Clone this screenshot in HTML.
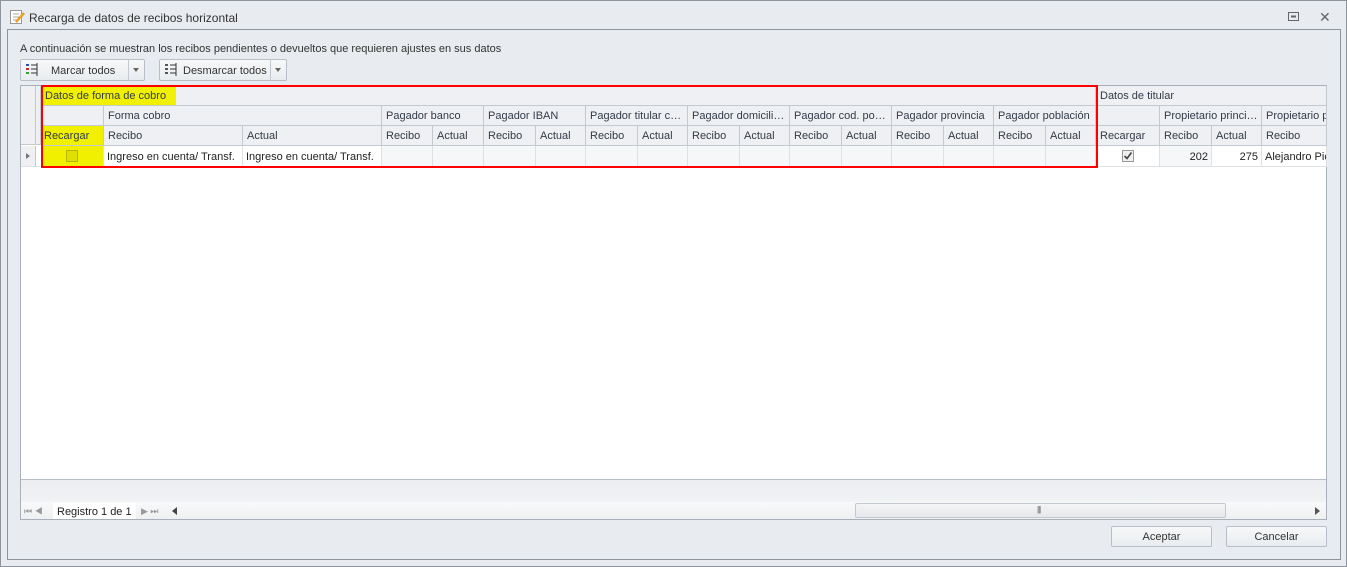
<!DOCTYPE html>
<html><head><meta charset="utf-8"><style>
*{box-sizing:border-box;margin:0;padding:0}
body{width:1347px;height:567px;background:#e8ebef;font-family:"Liberation Sans",sans-serif;font-size:11px;color:#222;position:relative;overflow:hidden}
.a{position:absolute}
.h{position:absolute;background:#eef0f3;border-right:1px solid #c3c9d1;border-bottom:1px solid #c3c9d1;color:#333b47;padding:4px 0 0 4px;white-space:nowrap;overflow:hidden;text-overflow:ellipsis;height:20px}
.d{position:absolute;border-right:1px solid #dde0e4;border-bottom:1px solid #dde0e4;height:21px;padding:5px 3px 0 3px;white-space:nowrap;overflow:hidden;background:#fff}
.btn{position:absolute;border:1px solid #b9bfc8;border-radius:2px;background:linear-gradient(#f7f8f9,#e9ecef);color:#333;text-align:center}
</style></head><body>
<div class="a" style="left:0;top:0;width:1347px;height:567px;border:1px solid #8d949c"></div>
<svg class="a" style="left:9px;top:9px" width="16" height="16"><rect x="1.5" y="1.5" width="11" height="13" fill="#fff" stroke="#999"/><line x1="4" y1="5" x2="10" y2="5" stroke="#aaa"/><line x1="4" y1="8" x2="10" y2="8" stroke="#aaa"/><line x1="4" y1="11" x2="8" y2="11" stroke="#aaa"/><path d="M7 13 L15 4" stroke="#e8a020" stroke-width="2.5"/></svg>
<div class="a" style="left:29px;top:11px;font-size:12px;color:#333">Recarga de datos de recibos horizontal</div>
<svg class="a" style="left:1288px;top:12px" width="12" height="10"><rect x="0.5" y="0.5" width="10" height="8" fill="none" stroke="#666"/><rect x="3" y="3.5" width="5" height="2" fill="#666"/></svg>
<div class="a" style="left:1319px;top:9px;font-size:14px;color:#666">✕</div>
<div class="a" style="left:7px;top:29px;width:1334px;height:531px;border:1px solid #8d949c"></div>
<div class="a" style="left:20px;top:43px;color:#333">A continuación se muestran los recibos pendientes o devueltos que requieren ajustes en sus datos</div>
<div class="btn" style="left:20px;top:59px;width:125px;height:22px"></div>
<div class="a" style="left:128px;top:59px;width:1px;height:22px;background:#c3c9d1"></div>
<svg class="a" style="left:26px;top:63px" width="12" height="13"><rect x="0" y="1" width="3" height="2" fill="#2a4fb0"/><rect x="0" y="5" width="3" height="2" fill="#c03030"/><rect x="0" y="9" width="3" height="2" fill="#30a030"/><path d="M5 2h6M5 6h6M5 10h6" stroke="#333"/><path d="M11 0v13" stroke="#333"/></svg>
<div class="a" style="left:51px;top:65px;color:#333">Marcar todos</div>
<div class="a" style="left:133px;top:68px;border:3px solid transparent;border-top:4px solid #666"></div>
<div class="btn" style="left:159px;top:59px;width:128px;height:22px"></div>
<div class="a" style="left:270px;top:59px;width:1px;height:22px;background:#c3c9d1"></div>
<svg class="a" style="left:165px;top:63px" width="12" height="13"><path d="M0 2h3M0 6h3M0 10h3" stroke="#555" stroke-width="2"/><path d="M5 2h6M5 6h6M5 10h6M11 0v13" stroke="#333"/></svg>
<div class="a" style="left:183px;top:65px;color:#333">Desmarcar todos</div>
<div class="a" style="left:275px;top:68px;border:3px solid transparent;border-top:4px solid #666"></div>
<div class="a" style="left:20px;top:85px;width:1307px;height:435px;background:#fff;border:1px solid #a9b0ba"></div>
<div class="a" style="left:21px;top:479px;width:1305px;height:40px;background:linear-gradient(#eceef1,#f4f5f7);border-top:1px solid #b8bfc9"></div>
<div class="h" style="left:21px;top:86px;width:15px;height:59px"></div>
<div class="h" style="left:36px;top:86px;width:5px;height:59px"></div>
<div class="h" style="left:41px;top:86px;width:1055px;padding-left:2px"><span style="background:#f0f000;padding:3px 10px 4px 2px">Datos de forma de cobro</span></div>
<div class="h" style="left:1096px;top:86px;width:231px">Datos de titular</div>
<div class="h" style="left:41px;top:106px;width:63px"></div>
<div class="h" style="left:104px;top:106px;width:278px">Forma cobro</div>
<div class="h" style="left:382px;top:106px;width:102px">Pagador banco</div>
<div class="h" style="left:484px;top:106px;width:102px">Pagador IBAN</div>
<div class="h" style="left:586px;top:106px;width:102px">Pagador titular cuenta</div>
<div class="h" style="left:688px;top:106px;width:102px">Pagador domicilio completo</div>
<div class="h" style="left:790px;top:106px;width:102px">Pagador cod. postal</div>
<div class="h" style="left:892px;top:106px;width:102px">Pagador provincia</div>
<div class="h" style="left:994px;top:106px;width:102px">Pagador población</div>
<div class="h" style="left:1096px;top:106px;width:64px"></div>
<div class="h" style="left:1160px;top:106px;width:102px">Propietario principal</div>
<div class="h" style="left:1262px;top:106px;width:65px;text-overflow:clip">Propietario p</div>
<div class="h" style="left:41px;top:126px;width:63px;background:#f0f000;padding-left:3px">Recargar</div>
<div class="h" style="left:104px;top:126px;width:139px">Recibo</div>
<div class="h" style="left:243px;top:126px;width:139px">Actual</div>
<div class="h" style="left:382px;top:126px;width:51px">Recibo</div><div class="h" style="left:433px;top:126px;width:51px">Actual</div>
<div class="h" style="left:484px;top:126px;width:52px">Recibo</div><div class="h" style="left:536px;top:126px;width:50px">Actual</div>
<div class="h" style="left:586px;top:126px;width:52px">Recibo</div><div class="h" style="left:638px;top:126px;width:50px">Actual</div>
<div class="h" style="left:688px;top:126px;width:52px">Recibo</div><div class="h" style="left:740px;top:126px;width:50px">Actual</div>
<div class="h" style="left:790px;top:126px;width:52px">Recibo</div><div class="h" style="left:842px;top:126px;width:50px">Actual</div>
<div class="h" style="left:892px;top:126px;width:52px">Recibo</div><div class="h" style="left:944px;top:126px;width:50px">Actual</div>
<div class="h" style="left:994px;top:126px;width:52px">Recibo</div><div class="h" style="left:1046px;top:126px;width:50px">Actual</div>
<div class="h" style="left:1096px;top:126px;width:64px">Recargar</div>
<div class="h" style="left:1160px;top:126px;width:52px">Recibo</div><div class="h" style="left:1212px;top:126px;width:50px">Actual</div>
<div class="h" style="left:1262px;top:126px;width:65px">Recibo</div>
<div class="d" style="left:21px;top:146px;width:15px;background:#eef0f3;border-right-color:#c3c9d1"><div class="a" style="left:5px;top:7px;border:3px solid transparent;border-left:4px solid #777"></div></div>
<div class="d" style="left:36px;top:146px;width:5px"></div>
<div class="d" style="left:41px;top:146px;width:63px;background:#f0f000"><div class="a" style="left:25px;top:4px;width:12px;height:12px;border:1px solid #b5b500;background:#e0e000"></div></div>
<div class="d" style="left:104px;top:146px;width:139px">Ingreso en cuenta/ Transf.</div>
<div class="d" style="left:243px;top:146px;width:139px">Ingreso en cuenta/ Transf.</div>
<div class="d" style="left:382px;top:146px;width:51px;background:#f6f7f8"></div><div class="d" style="left:433px;top:146px;width:51px;background:#f6f7f8"></div>
<div class="d" style="left:484px;top:146px;width:52px;background:#f6f7f8"></div><div class="d" style="left:536px;top:146px;width:50px;background:#f6f7f8"></div>
<div class="d" style="left:586px;top:146px;width:52px;background:#f6f7f8"></div><div class="d" style="left:638px;top:146px;width:50px;background:#f6f7f8"></div>
<div class="d" style="left:688px;top:146px;width:52px;background:#f6f7f8"></div><div class="d" style="left:740px;top:146px;width:50px;background:#f6f7f8"></div>
<div class="d" style="left:790px;top:146px;width:52px;background:#f6f7f8"></div><div class="d" style="left:842px;top:146px;width:50px;background:#f6f7f8"></div>
<div class="d" style="left:892px;top:146px;width:52px;background:#f6f7f8"></div><div class="d" style="left:944px;top:146px;width:50px;background:#f6f7f8"></div>
<div class="d" style="left:994px;top:146px;width:52px;background:#f6f7f8"></div><div class="d" style="left:1046px;top:146px;width:50px;background:#f6f7f8"></div>
<div class="d" style="left:1096px;top:146px;width:64px"><svg class="a" style="left:26px;top:4px" width="12" height="12"><rect x="0.5" y="0.5" width="11" height="11" fill="#f0f0f0" stroke="#999"/><path d="M2.5 6l2.5 2.5 4.5-6" stroke="#444" stroke-width="1.6" fill="none"/></svg></div>
<div class="d" style="left:1160px;top:146px;width:52px;text-align:right;background:#f6f7f8">202</div>
<div class="d" style="left:1212px;top:146px;width:50px;text-align:right">275</div>
<div class="d" style="left:1262px;top:146px;width:65px">Alejandro Pic</div>
<div class="a" style="left:41px;top:85px;width:1057px;height:83px;border:2px solid #ff0000"></div>
<div class="a" style="left:21px;top:502px;width:1305px;height:17px;background:linear-gradient(#f8f9fa,#eef0f2)"></div>
<div class="a" style="left:24px;top:506px;font-size:9px;color:#999">⏮ ◀</div>
<div class="a" style="left:53px;top:503px;width:83px;height:16px;background:#fff"></div>
<div class="a" style="left:57px;top:506px;color:#222">Registro 1 de 1</div>
<div class="a" style="left:141px;top:506px;font-size:9px;color:#999">▶ ⏭</div>
<div class="a" style="left:172px;top:507px;border:4px solid transparent;border-right:5px solid #444;border-left:0"></div>
<div class="a" style="left:855px;top:503px;width:371px;height:15px;border:1px solid #c3c9d1;border-radius:2px;background:linear-gradient(#f4f5f6,#e6e8eb)"></div>
<div class="a" style="left:1037px;top:505px;font-size:8px;color:#666;letter-spacing:-1px">|||</div>
<div class="a" style="left:1315px;top:507px;border:4px solid transparent;border-left:5px solid #555;border-right:0"></div>
<div class="btn" style="left:1111px;top:526px;width:101px;height:21px;padding-top:4px">Aceptar</div>
<div class="btn" style="left:1226px;top:526px;width:101px;height:21px;padding-top:4px">Cancelar</div>
</body></html>
